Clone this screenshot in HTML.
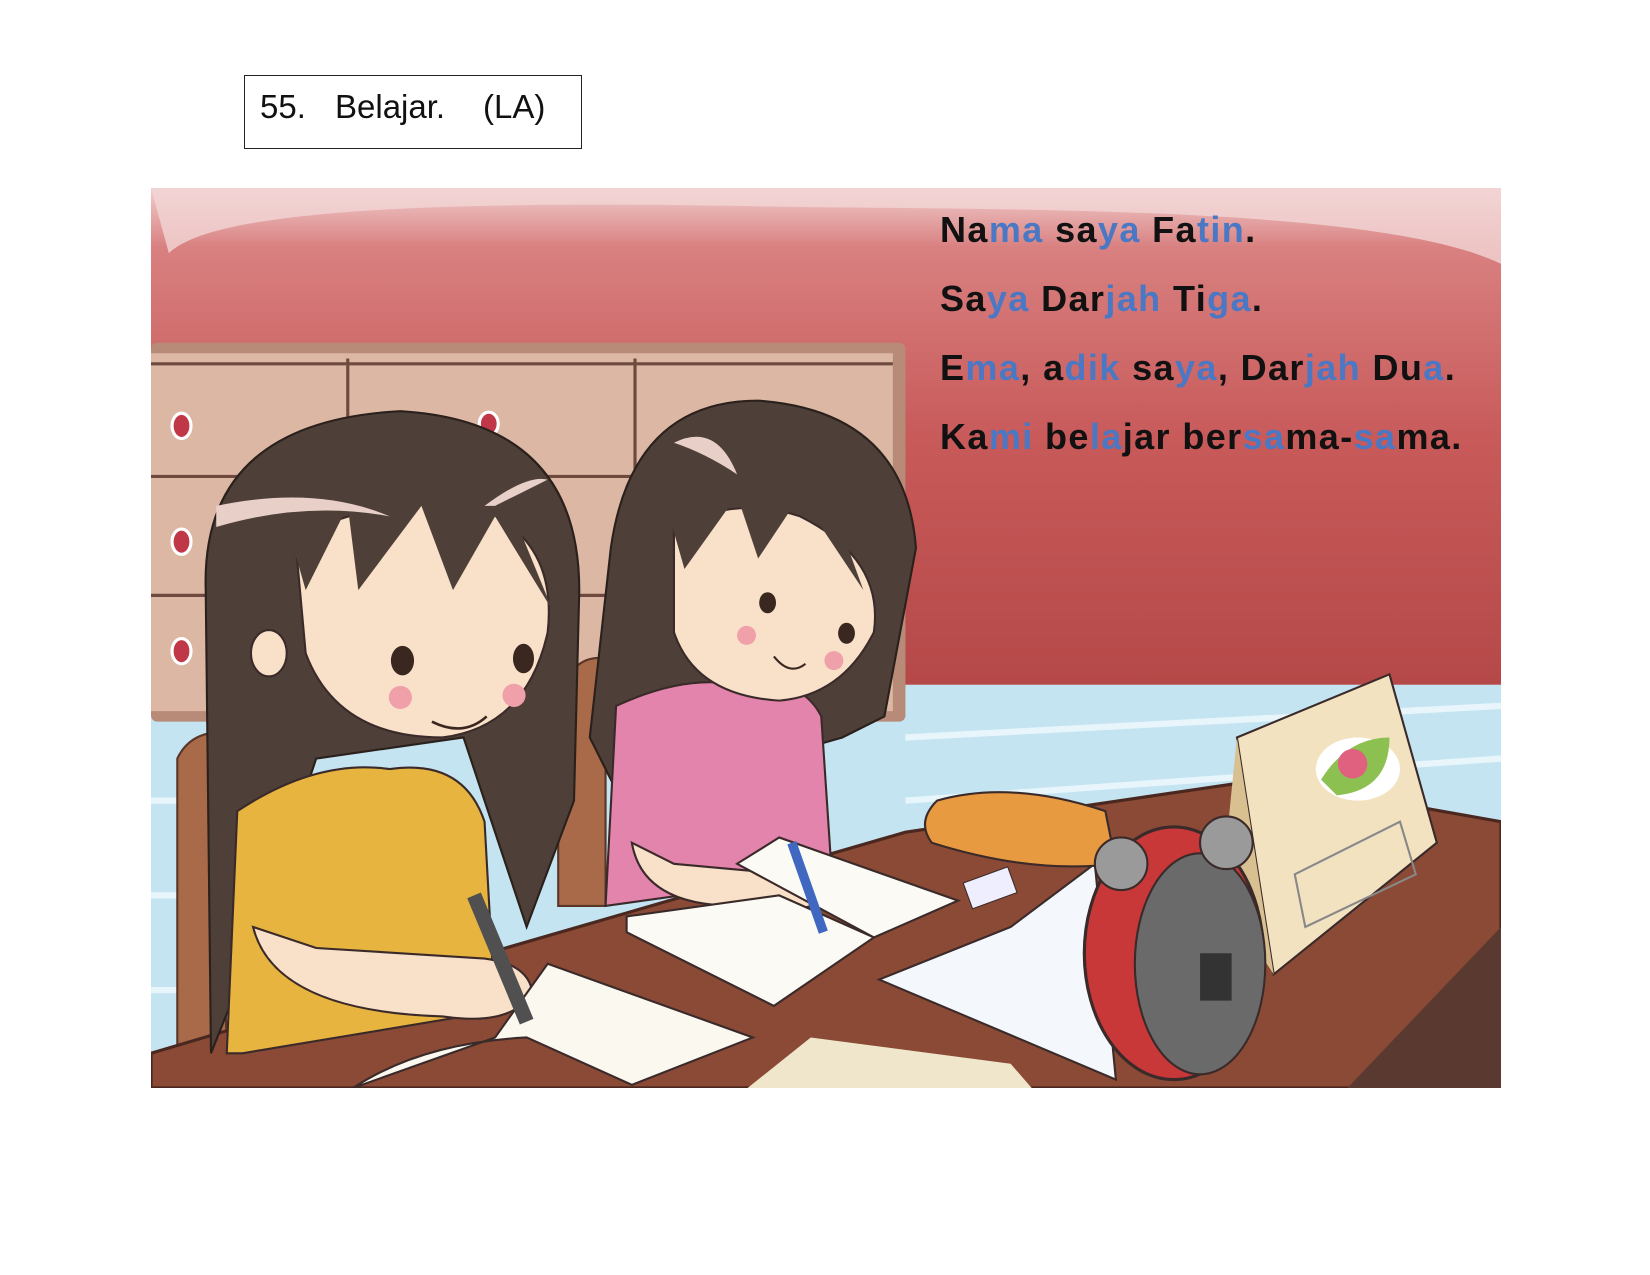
<!DOCTYPE html>
<html><head><meta charset="utf-8"><style>
html,body{margin:0;padding:0;background:#fff;width:1650px;height:1275px;overflow:hidden;position:relative;font-family:"Liberation Sans",sans-serif}
.box{position:absolute;left:244px;top:75px;width:338px;height:74px;border:1.5px solid #222;box-sizing:border-box}
.box span{position:absolute;top:12px;font-size:33px;color:#111}
svg{position:absolute;left:151px;top:188px}
.t{position:absolute;left:940px;font-weight:bold;font-size:36px;color:#111;white-space:nowrap;letter-spacing:1.4px}
.t b{color:#4a78c4;font-weight:bold}
</style></head><body>
<div class="box"><span style="left:15px">55.</span><span style="left:90px">Belajar.</span><span style="left:238px">(LA)</span></div>
<svg width="1350" height="900" viewBox="143 178 1283 855" preserveAspectRatio="none">
<defs>
<linearGradient id="w" x1="0" y1="0" x2="0" y2="1">
<stop offset="0" stop-color="#f0cccc"/><stop offset="0.12" stop-color="#d98080"/><stop offset="0.5" stop-color="#c85a5a"/><stop offset="1" stop-color="#b54848"/></linearGradient>
</defs>
<rect x="143" y="178" width="1283" height="472" fill="url(#w)"/>
<path d="M143 178 H1426 V250 C1300 190 900 200 700 195 C400 190 200 200 160 240 Z" fill="#f2d6d6" opacity="0.8"/>
<rect x="143" y="650" width="1283" height="383" fill="#c4e4f2"/>
<path d="M860 700 L1426 670 M860 760 L1426 720 M143 760 L420 760 M143 850 L300 850 M143 940 L250 940" stroke="#e8f6fc" stroke-width="6"/>
<rect x="143" y="325" width="717" height="360" rx="6" fill="#b88a78"/>
<rect x="143" y="335" width="705" height="340" fill="#dcb8a4"/>
<g stroke="#6e4a3e" stroke-width="3" fill="none">
<path d="M143 452 H848 M143 565 H848 M330 340 V452 M603 340 V675 M143 345 H848"/></g>
<g fill="#c03848" stroke="#fff" stroke-width="3"><ellipse cx="172" cy="404" rx="9" ry="12"/><ellipse cx="172" cy="514" rx="9" ry="12"/><ellipse cx="172" cy="618" rx="9" ry="12"/><ellipse cx="464" cy="402" rx="9" ry="11"/></g>
<path d="M168 720 Q180 695 210 695 L215 1010 L168 1010 Z" fill="#a86a48" stroke="#5a3528" stroke-width="2"/>
<path d="M530 660 Q545 620 575 625 L575 860 L530 860 Z" fill="#a86a48" stroke="#5a3528" stroke-width="2"/>
<path d="M143 1000 L480 900 L860 790 L1200 740 L1426 780 L1426 1033 L143 1033 Z" fill="#8a4a35" stroke="#4a2820" stroke-width="3"/>
<path d="M1280 1033 L1426 880 L1426 1033 Z" fill="#5a3a30"/>
<path d="M580 520 Q600 380 720 380 Q860 390 870 520 L840 680 L800 700 L590 760 L560 700 Z" fill="#4e3f38" stroke="#2a201c" stroke-width="2"/>
<path d="M575 860 L585 670 Q650 640 700 650 Q760 640 780 680 L790 830 Z" fill="#e284ac" stroke="#3a2a2a" stroke-width="2"/>
<path d="M640 500 Q700 470 760 490 Q840 530 830 600 Q800 660 740 665 Q660 660 640 600 Z" fill="#f9e0c8" stroke="#3a2a2a" stroke-width="2"/>
<path d="M630 470 Q700 420 780 450 L820 560 L760 470 L720 530 L700 470 L650 540 Z" fill="#4e3f38"/>
<path d="M640 420 Q680 400 700 450 Q670 430 640 420Z" fill="#e8d0c8"/>
<ellipse cx="729" cy="572" rx="8" ry="10" fill="#3a2820"/><ellipse cx="804" cy="601" rx="8" ry="10" fill="#3a2820"/>
<circle cx="709" cy="603" r="9" fill="#f0a0a8"/><circle cx="792" cy="627" r="9" fill="#f0a0a8"/>
<path d="M735 623 Q750 642 765 630" stroke="#3a2820" stroke-width="2" fill="none"/>
<path d="M195 560 Q190 400 380 390 Q550 400 550 560 L545 760 L500 880 L440 700 L300 720 L240 900 L200 1000 Z" fill="#4e3f38" stroke="#2a201c" stroke-width="2"/>
<path d="M215 1000 L225 770 Q300 720 370 730 Q440 720 460 780 L470 960 L230 1000 Z" fill="#e8b440" stroke="#3a2a2a" stroke-width="2"/>
<path d="M280 510 Q360 470 450 480 Q530 510 520 600 Q500 690 420 700 Q320 700 290 620 Z" fill="#f9e0c8" stroke="#3a2a2a" stroke-width="2"/>
<path d="M270 490 Q370 440 480 470 L525 580 L470 490 L430 560 L400 480 L340 560 L330 480 L290 560 Z" fill="#4e3f38"/>
<path d="M205 480 Q300 460 370 490 Q290 475 205 500Z" fill="#e8d0c8"/>
<path d="M460 480 Q500 450 520 455 Q490 470 470 480Z" fill="#e8d0c8"/>
<ellipse cx="255" cy="620" rx="17" ry="22" fill="#f9e0c8" stroke="#3a2a2a" stroke-width="2"/>
<ellipse cx="382" cy="627" rx="11" ry="14" fill="#3a2820"/><ellipse cx="497" cy="625" rx="10" ry="14" fill="#3a2820"/>
<circle cx="380" cy="662" r="11" fill="#f0a0a8"/><circle cx="488" cy="660" r="11" fill="#f0a0a8"/>
<path d="M410 685 Q440 700 462 680" stroke="#3a2820" stroke-width="2.5" fill="none"/>
<path d="M240 880 Q260 960 420 965 Q490 975 505 940 Q500 915 460 910 L300 900 Z" fill="#f9e0c8" stroke="#3a2a2a" stroke-width="2"/>
<path d="M600 800 Q610 860 700 860 Q770 870 790 850 Q780 825 750 830 L640 820 Z" fill="#f9e0c8" stroke="#3a2a2a" stroke-width="2"/>
<path d="M335 1033 Q400 990 500 985 L600 1030 L715 985 L520 915 L470 985 Z" fill="#fbf8f0" stroke="#3a2a2a" stroke-width="2"/>
<path d="M595 870 L740 850 L830 890 L735 955 L595 885 Z" fill="#fbfaf4" stroke="#3a2a2a" stroke-width="2"/>
<path d="M700 820 L740 795 L910 855 L830 890 Z" fill="#fbfaf4" stroke="#3a2a2a" stroke-width="2"/>
<path d="M835 930 L960 880 L1040 820 L1060 1025 Z" fill="#f4f8fc" stroke="#3a2a2a" stroke-width="2"/>
<path d="M710 1033 L770 985 L960 1010 L980 1033 Z" fill="#efe6cc"/>
<path d="M450 850 L500 970" stroke="#505050" stroke-width="14"/>
<path d="M752 800 L782 885" stroke="#4068c0" stroke-width="9"/>
<path d="M890 760 Q960 740 1050 770 L1060 820 Q980 830 885 800 Q870 780 890 760Z" fill="#e89a40" stroke="#3a2a2a" stroke-width="2"/>
<rect x="918" y="830" width="45" height="26" fill="#eef" stroke="#3a2a2a" transform="rotate(-20 940 843)"/>
<path d="M1175 700 L1320 640 L1365 800 L1210 925 Z" fill="#f2e2c0" stroke="#3a2a2a" stroke-width="2"/>
<path d="M1160 850 L1175 700 L1210 925 Z" fill="#d8c090"/>
<ellipse cx="1290" cy="730" rx="40" ry="30" fill="#fff"/>
<path d="M1255 740 Q1280 700 1320 700 Q1320 750 1270 755Z" fill="#8cc050"/><circle cx="1285" cy="725" r="14" fill="#e06080"/>
<path d="M1230 830 L1330 780 L1345 830 L1240 880 Z" fill="none" stroke="#888" stroke-width="2"/>
<ellipse cx="1115" cy="905" rx="85" ry="120" fill="#c83838" stroke="#3a2a2a" stroke-width="3"/>
<ellipse cx="1140" cy="915" rx="62" ry="105" fill="#6a6a6a" stroke="#3a2a2a" stroke-width="2"/>
<circle cx="1065" cy="820" r="25" fill="#9a9a9a" stroke="#3a2a2a" stroke-width="2"/>
<circle cx="1165" cy="800" r="25" fill="#9a9a9a" stroke="#3a2a2a" stroke-width="2"/>
<rect x="1140" y="905" width="30" height="45" fill="#333"/>
</svg>
<div class="t" style="top:209px">Na<b>ma</b> sa<b>ya</b> Fa<b>tin</b>.</div>
<div class="t" style="top:278px">Sa<b>ya</b> Dar<b>jah</b> Ti<b>ga</b>.</div>
<div class="t" style="top:347px">E<b>ma</b>, a<b>dik</b> sa<b>ya</b>, Dar<b>jah</b> Du<b>a</b>.</div>
<div class="t" style="top:416px">Ka<b>mi</b> be<b>la</b>jar ber<b>sa</b>ma-<b>sa</b>ma.</div>
</body></html>
